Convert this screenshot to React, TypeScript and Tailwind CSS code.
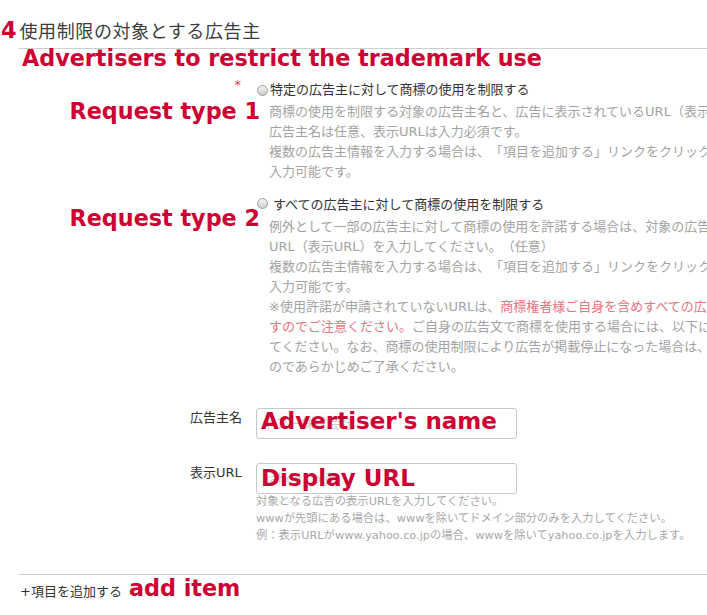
import React from "react";

const jp = "font-['DejaVu_Sans','Noto_Sans_CJK_JP',sans-serif] [text-spacing-trim:space-all]";
const mark = "font-['DejaVu_Sans',sans-serif] font-bold text-[#cc0033]";

const Radio: React.FC = () => (
  <span className="inline-block w-[11px] h-[11px] shrink-0 rounded-full border border-[#9c9c9c] bg-linear-to-b from-[#f5f5f5] to-[#cdcdcd]" />
);

const App: React.FC = () => {
  return (
    <div className={`relative w-[707px] h-[615px] overflow-hidden bg-white ${jp}`}>
      {/* 見出し */}
      <div className="flex items-baseline h-[48px] pt-[18px] pl-[1px]">
        <span className={`${mark} text-[22.3px] leading-[22px]`}>4</span>
        <span className="ml-[3px] text-[18px] tracking-[0.6px] text-[#3c3c3c]">使用制限の対象とする広告主</span>
      </div>
      <div className="ml-[19px] h-px bg-[#cfcfcf]" />
      <p className={`${mark} ml-[22px] text-[22.3px] leading-[18px] whitespace-nowrap`}>
        Advertisers to restrict the trademark use
      </p>

      {/* 種別 1 */}
      <div className="mt-[13px] flex">
        <div className="w-[257px] shrink-0 flex flex-col items-end">
          <span className="mr-[16px] text-[13px] leading-[10px] text-[#e0405a]">*</span>
          <span className={`${mark} -mr-[3px] mt-[10px] text-[22.3px] leading-[22px] whitespace-nowrap`}>Request type 1</span>
        </div>
        <div className="whitespace-nowrap">
          <label className="flex items-center h-[20px] text-[13px] text-[#333]">
            <Radio />
            <span className="ml-[2px]">特定の広告主に対して商標の使用を制限する</span>
          </label>
          <div className="mt-[2px] pl-[12px] text-[13px] leading-[20px] text-[#a3a3a3]">
            <p>商標の使用を制限する対象の広告主名と、広告に表示されているURL（表示URL）を入力してください。</p>
            <p>広告主名は任意、表示URLは入力必須です。</p>
            <p>複数の広告主情報を入力する場合は、「項目を追加する」リンクをクリックしてください。最大50件まで</p>
            <p>入力可能です。</p>
          </div>
        </div>
      </div>

      {/* 種別 2 */}
      <div className="mt-[13px] flex">
        <div className="w-[257px] shrink-0 flex flex-col items-end">
          <span className={`${mark} -mr-[3px] mt-[12px] text-[22.3px] leading-[22px] whitespace-nowrap`}>Request type 2</span>
        </div>
        <div className="whitespace-nowrap">
          <label className="flex items-center h-[20px] text-[13px] text-[#333]">
            <span className="-mt-[3px] flex"><Radio /></span>
            <span className="ml-[5px]">すべての広告主に対して商標の使用を制限する</span>
          </label>
          <div className="mt-[2px] pl-[12px] text-[13px] leading-[20px] text-[#a3a3a3]">
            <p>例外として一部の広告主に対して商標の使用を許諾する場合は、対象の広告主名と広告に表示されている</p>
            <p>URL（表示URL）を入力してください。（任意）</p>
            <p>複数の広告主情報を入力する場合は、「項目を追加する」リンクをクリックしてください。最大50件まで</p>
            <p>入力可能です。</p>
            <p>
              ※使用許諾が申請されていないURLは、
              <span className="text-[#ea7380]">商標権者様ご自身を含めすべての広告が掲載停止となりま</span>
            </p>
            <p>
              <span className="text-[#ea7380]">すのでご注意ください。</span>
              ご自身の広告文で商標を使用する場合には、以下に表示URLを入力し
            </p>
            <p>てください。なお、商標の使用制限により広告が掲載停止になった場合は、当社では責任を負いかねます</p>
            <p>のであらかじめご了承ください。</p>
          </div>
        </div>
      </div>

      {/* 入力欄 */}
      <div className="mt-[31px] ml-[190px] flex">
        <span className="w-[66px] shrink-0 text-[13px] leading-[20px] text-[#333]">広告主名</span>
        <div className="relative">
          <input
            className="w-[261px] h-[31px] rounded-[3px] border border-[#c8c8c8] px-[5px] text-[13px] text-[#333] outline-none placeholder:text-[#cccccc]"
            placeholder="ヤフー株式会社"
          />
          <span className={`${mark} pointer-events-none absolute left-[5px] top-[2px] text-[23px] leading-[23px] whitespace-nowrap`}>
            Advertiser's name
          </span>
        </div>
      </div>

      <div className="mt-[24px] ml-[190px] flex">
        <span className="w-[66px] shrink-0 text-[13px] leading-[20px] text-[#333]">表示URL</span>
        <div>
          <div className="relative">
            <input
              className="w-[261px] h-[31px] rounded-[3px] border border-[#c8c8c8] px-[5px] text-[13px] text-[#333] outline-none placeholder:text-[#cccccc]"
              placeholder="yahoo.co.jp"
            />
            <span className={`${mark} pointer-events-none absolute left-[5px] top-[4px] text-[23px] leading-[23px] whitespace-nowrap`}>
              Display URL
            </span>
          </div>
          <div className="-mt-[1px] text-[11.3px] leading-[17px] text-[#a8a8a8] whitespace-nowrap">
            <p>対象となる広告の表示URLを入力してください。</p>
            <p>wwwが先頭にある場合は、wwwを除いてドメイン部分のみを入力してください。</p>
            <p>例：表示URLがwww.yahoo.co.jpの場合、wwwを除いてyahoo.co.jpを入力します。</p>
          </div>
        </div>
      </div>

      {/* 項目追加 */}
      <div className="mt-[30px] ml-[19px] h-px bg-[#cfcfcf]" />
      <div className="flex items-baseline pl-[20px] pt-[2px]">
        <span className="text-[13px] text-[#333]">+項目を追加する</span>
        <span className={`${mark} ml-[7px] text-[22.3px] leading-[22px]`}>add item</span>
      </div>
    </div>
  );
};

export default App;
